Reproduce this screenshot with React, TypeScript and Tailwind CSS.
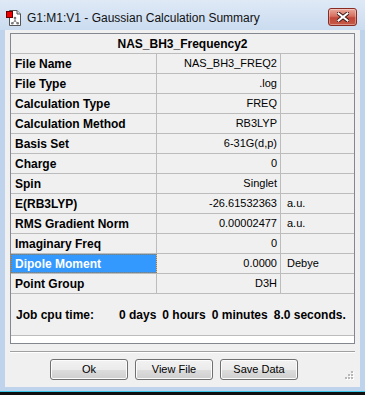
import React from "react";

const rows: [string, string, string][] = [
  ["File Name", "NAS_BH3_FREQ2", ""],
  ["File Type", ".log", ""],
  ["Calculation Type", "FREQ", ""],
  ["Calculation Method", "RB3LYP", ""],
  ["Basis Set", "6-31G(d,p)", ""],
  ["Charge", "0", ""],
  ["Spin", "Singlet", ""],
  ["E(RB3LYP)", "-26.61532363", "a.u."],
  ["RMS Gradient Norm", "0.00002477", "a.u."],
  ["Imaginary Freq", "0", ""],
  ["Dipole Moment", "0.0000", "Debye"],
  ["Point Group", "D3H", ""],
];

function AppIcon() {
  return (
    <svg width="16" height="17" viewBox="0 0 16 17">
      <path d="M3.5 1.5 H11 L14.5 5 V16.5 H3.5 Z" fill="#fff" stroke="#555" />
      <path d="M11 1.5 V5 H14.5" fill="#ddd" stroke="#555" />
      <rect x="0.5" y="2.5" width="6" height="6" fill="#e00" stroke="#600" />
      <line x1="9" y1="9" x2="9" y2="12" stroke="#888" strokeWidth="1" />
      <line x1="9" y1="12" x2="6.5" y2="14" stroke="#888" strokeWidth="1" />
      <line x1="9" y1="12" x2="11.5" y2="14" stroke="#888" strokeWidth="1" />
      <circle cx="9" cy="9" r="1.3" fill="#777" />
      <circle cx="6.3" cy="14.2" r="1.3" fill="#777" />
      <circle cx="11.7" cy="14.2" r="1.3" fill="#777" />
      <circle cx="9" cy="12" r="1" fill="#999" />
    </svg>
  );
}

function CloseButton() {
  return (
    <div className="mt-[8px] mr-[8px] flex h-[18px] w-[29px] items-center justify-center rounded-[3px] border border-[#8a2a20] bg-[linear-gradient(#e9a99c_0%,#d6705f_45%,#c2473a_55%,#c65a45_100%)] shadow-[inset_0_0_0_1px_rgba(255,255,255,0.35)]">
      <svg width="12" height="10" viewBox="0 0 12 10">
        <path
          d="M1.5 1.5 L10.5 8.5 M10.5 1.5 L1.5 8.5"
          stroke="#3a1a18"
          strokeWidth="4"
          strokeLinecap="square"
        />
        <path
          d="M1.5 1.5 L10.5 8.5 M10.5 1.5 L1.5 8.5"
          stroke="#ffffff"
          strokeWidth="2"
          strokeLinecap="square"
        />
      </svg>
    </div>
  );
}

function Button({ label }: { label: string }) {
  return (
    <div className="flex h-[21px] w-[78px] items-center justify-center rounded-[3px] border border-[#707070] bg-[linear-gradient(#f2f2f2_0%,#ebebeb_50%,#dddddd_50%,#cfcfcf_100%)] text-[11px] text-black shadow-[inset_0_0_0_1px_#fcfcfc]">
      {label}
    </div>
  );
}

export default function App() {
  return (
    <div className="flex h-[395px] w-[365px] flex-col overflow-hidden bg-[#bfd4ec] font-['Liberation_Sans',Arial,sans-serif]">
      {/* Title bar */}
      <div className="flex h-[30px] shrink-0 items-start justify-between bg-[linear-gradient(#dfe9f6,#cadcf0)]">
        <div className="flex items-center pl-[6px] pt-[9px]">
          <AppIcon />
          <span className="ml-[5px] text-[12px] leading-[14px] text-[#111]">
            G1:M1:V1 - Gaussian Calculation Summary
          </span>
        </div>
        <CloseButton />
      </div>

      {/* Client area */}
      <div className="relative mx-[5px] flex h-[357px] shrink-0 flex-col bg-[#f0f0f0]">
        {/* Table */}
        <div className="mx-[5px] mt-[3px] flex h-[311px] flex-col border border-[#828790] bg-white">
          <div className="flex h-[20px] shrink-0 items-center justify-center border-b border-[#bcbcbc] bg-[#f0f0f0] text-[12px] font-bold text-black">
            NAS_BH3_Frequency2
          </div>
          {rows.map(([label, value, unit]) => {
            const sel = label === "Dipole Moment";
            return (
              <div
                key={label}
                className="flex h-[20px] shrink-0 border-b border-[#bcbcbc] bg-[#f0f0f0]"
              >
                <div
                  className={
                    sel
                      ? "flex w-[146px] items-center border-r border-[#bcbcbc] bg-[#3399ff] pl-[4px] text-[12px] font-bold text-white outline outline-1 -outline-offset-1 outline-dotted outline-[#a07840]"
                      : "flex w-[146px] items-center border-r border-[#bcbcbc] pl-[4px] text-[12px] font-bold text-black"
                  }
                >
                  {label}
                </div>
                <div className="flex w-[124px] items-center justify-end border-r border-[#bcbcbc] pr-[3px] text-[11px] text-black">
                  {value}
                </div>
                <div className="flex flex-1 items-center pl-[6px] text-[11px] text-black">
                  {unit}
                </div>
              </div>
            );
          })}
          <div className="flex h-[42px] shrink-0 items-center whitespace-nowrap border-b border-[#bcbcbc] bg-[#f0f0f0] text-[12px] font-bold text-black">
            <span className="w-[108px] shrink-0 pl-[5px]">Job cpu time:</span>
            <div className="flex shrink-0 gap-[6px]">
              <span>0 days</span>
              <span>0 hours</span>
              <span>0 minutes</span>
              <span>8.0 seconds.</span>
            </div>
          </div>
        </div>

        {/* Separator */}
        <div className="mx-[5px] mt-[7px] h-[2px] border-t border-[#a0a0a0] border-b border-b-white" />

        {/* Buttons */}
        <div className="mt-[6px] flex gap-[7px] pl-[45px]">
          <Button label="Ok" />
          <Button label="View File" />
          <Button label="Save Data" />
        </div>

        {/* Size grip */}
        <svg
          className="absolute bottom-[7px] right-[6px]"
          width="10"
          height="10"
          viewBox="0 0 10 10"
        >
          {[
            [7, 1],
            [4, 4],
            [7, 4],
            [1, 7],
            [4, 7],
            [7, 7],
          ].map(([x, y]) => (
            <g key={`${x}-${y}`}>
              <rect x={x + 1} y={y + 1} width="2" height="2" fill="#fff" />
              <rect x={x} y={y} width="2" height="2" fill="#b8b8b8" />
            </g>
          ))}
        </svg>
      </div>

      {/* Bottom frame */}
      <div className="h-[4px] shrink-0 bg-[#bfd4ec]" />
      <div className="h-[1px] shrink-0 bg-[#3cc8e8]" />
      <div className="flex-1 bg-[#101010]" />
    </div>
  );
}
